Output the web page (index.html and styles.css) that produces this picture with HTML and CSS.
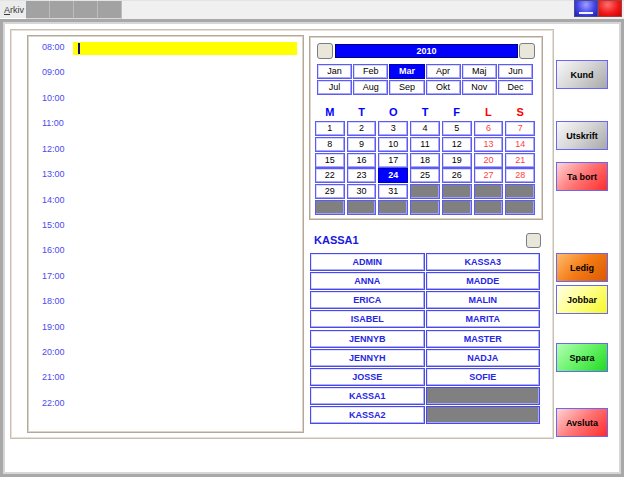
FILE: index.html
```html
<!DOCTYPE html>
<html>
<head>
<meta charset="utf-8">
<link rel="stylesheet" href="styles.css">
</head>
<body>
<div class="titlebar">
  <div class="menu-tab"><span class="ul">A</span>rkiv</div>
  <div class="tool"></div><div class="tool"></div><div class="tool"></div><div class="tool"></div>
  <div class="spacer"></div>
  <div class="win-btn win-min"><span class="min-bar"></span></div>
  <div class="win-btn win-close"></div>
</div>
<div class="window">
  <div class="content">
    <div class="panel">
      <div class="schedule">
        <div class="slot"><span class="time">08:00</span><div class="entry"><span class="caret"></span></div></div>
        <div class="slot"><span class="time">09:00</span></div>
        <div class="slot"><span class="time">10:00</span></div>
        <div class="slot"><span class="time">11:00</span></div>
        <div class="slot"><span class="time">12:00</span></div>
        <div class="slot"><span class="time">13:00</span></div>
        <div class="slot"><span class="time">14:00</span></div>
        <div class="slot"><span class="time">15:00</span></div>
        <div class="slot"><span class="time">16:00</span></div>
        <div class="slot"><span class="time">17:00</span></div>
        <div class="slot"><span class="time">18:00</span></div>
        <div class="slot"><span class="time">19:00</span></div>
        <div class="slot"><span class="time">20:00</span></div>
        <div class="slot"><span class="time">21:00</span></div>
        <div class="slot"><span class="time">22:00</span></div>
      </div>
      <div class="side">
        <div class="calendar">
          <div class="year-row">
            <div class="nav-btn"></div>
            <div class="year">2010</div>
            <div class="nav-btn"></div>
          </div>
          <div class="months">
            <div class="cell">Jan</div><div class="cell">Feb</div><div class="cell sel">Mar</div><div class="cell">Apr</div><div class="cell">Maj</div><div class="cell">Jun</div>
            <div class="cell">Jul</div><div class="cell">Aug</div><div class="cell">Sep</div><div class="cell">Okt</div><div class="cell">Nov</div><div class="cell">Dec</div>
          </div>
          <div class="weekdays">
            <span>M</span><span>T</span><span>O</span><span>T</span><span>F</span><span class="wk-red">L</span><span class="wk-red">S</span>
          </div>
          <div class="days">
            <div class="cell">1</div><div class="cell">2</div><div class="cell">3</div><div class="cell">4</div><div class="cell">5</div><div class="cell we">6</div><div class="cell we">7</div>
            <div class="cell">8</div><div class="cell">9</div><div class="cell">10</div><div class="cell">11</div><div class="cell">12</div><div class="cell we">13</div><div class="cell we">14</div>
            <div class="cell">15</div><div class="cell">16</div><div class="cell">17</div><div class="cell">18</div><div class="cell">19</div><div class="cell we">20</div><div class="cell we">21</div>
            <div class="cell">22</div><div class="cell">23</div><div class="cell sel">24</div><div class="cell">25</div><div class="cell">26</div><div class="cell we">27</div><div class="cell we">28</div>
            <div class="cell">29</div><div class="cell">30</div><div class="cell">31</div><div class="cell empty"></div><div class="cell empty"></div><div class="cell empty"></div><div class="cell empty"></div>
            <div class="cell empty"></div><div class="cell empty"></div><div class="cell empty"></div><div class="cell empty"></div><div class="cell empty"></div><div class="cell empty"></div><div class="cell empty"></div>
          </div>
        </div>
        <div class="user-head">
          <span class="user-title">KASSA1</span>
          <div class="check"></div>
        </div>
        <div class="users">
          <div class="user">ADMIN</div><div class="user">KASSA3</div>
          <div class="user">ANNA</div><div class="user">MADDE</div>
          <div class="user">ERICA</div><div class="user">MALIN</div>
          <div class="user">ISABEL</div><div class="user">MARITA</div>
          <div class="user">JENNYB</div><div class="user">MASTER</div>
          <div class="user">JENNYH</div><div class="user">NADJA</div>
          <div class="user">JOSSE</div><div class="user">SOFIE</div>
          <div class="user">KASSA1</div><div class="user empty"></div>
          <div class="user">KASSA2</div><div class="user empty"></div>
        </div>
      </div>
    </div>
    <div class="actions">
      <div class="btn c-gray b-kund">Kund</div>
      <div class="btn c-gray b-utskrift">Utskrift</div>
      <div class="btn c-red b-tabort">Ta bort</div>
      <div class="btn c-orange b-ledig">Ledig</div>
      <div class="btn c-yellow b-jobbar">Jobbar</div>
      <div class="btn c-green b-spara">Spara</div>
      <div class="btn c-red b-avsluta">Avsluta</div>
    </div>
  </div>
</div>
</body>
</html>
```
FILE: styles.css
```css
* { box-sizing: border-box; }
html, body { margin: 0; padding: 0; }
body {
  width: 624px;
  height: 477px;
  overflow: hidden;
  background: #f0f0f0;
  font-family: "Liberation Sans", Arial, sans-serif;
  font-size: 9px;
}

/* title bar */
.titlebar {
  height: 19px;
  display: flex;
  background: #f0f0f0;
  border-top: 1px solid #e4e4e4;
}
.menu-tab {
  width: 26px;
  height: 18px;
  padding: 4px 0 0 4px;
  color: #3a3a3a;
  font-size: 9px;
  background: #ececec;
  border-bottom: 1px solid #ffffff;
}
.ul { text-decoration: underline; }
.tool {
  width: 24px;
  height: 18px;
  background: #a2a2a2;
  border-right: 1px solid #bcbcbc;
  border-bottom: 1px solid #d8d8d8;
}
.spacer { flex: 1; }
.win-btn {
  width: 24px;
  height: 17px;
  margin-top: -1px;
}
.win-min {
  background: radial-gradient(ellipse at 50% 25%, #a0a0ff 0%, #4646e8 55%, #1e1ea8 100%);
  border: 1px solid #4a4a90;
  display: flex;
  justify-content: center;
  align-items: flex-end;
  padding-bottom: 2px;
}
.min-bar {
  width: 14px;
  height: 2px;
  background: #f4f4ff;
}
.win-close {
  margin-right: 2px;
  background: radial-gradient(ellipse at 40% 25%, #ff7070 0%, #f01818 55%, #c80000 100%);
  border: 1px solid #a04040;
}

/* window */
.window {
  height: 458px;
  border: 3px solid #a8a8a8;
  background: #ffffff;
  box-shadow: inset 0 0 0 2px #d6d6d6;
}
.content {
  display: flex;
  padding: 7px 0 0 7px;
}
.panel {
  width: 544px;
  height: 410px;
  border: 1px solid #c8c0b4;
  box-shadow: inset 0 0 0 1px #e6e0d8;
  padding: 5px 0 0 16px;
  display: flex;
  gap: 5px;
  align-items: flex-start;
}

/* schedule */
.schedule {
  width: 277px;
  height: 398px;
  border: 1px solid #b4a898;
  box-shadow: inset 0 0 0 1px #dcd4c8;
  padding: 2px 0 0 2px;
}
.slot {
  height: 25.43px;
  display: flex;
  align-items: flex-start;
  padding-top: 4px;
}
.time {
  width: 43px;
  padding-left: 12px;
  color: #4a4af0;
  font-size: 9px;
  line-height: 11px;
}
.entry {
  width: 224px;
  height: 13px;
  background: #ffff00;
  padding: 1px 0 0 5px;
}
.caret {
  display: block;
  width: 2px;
  height: 11px;
  background: #10108a;
}

/* calendar */
.side {
  width: 234px;
  margin-top: 1px;
}
.calendar {
  height: 184px;
  border: 1px solid #b4a898;
  box-shadow: inset 0 0 0 1px #dcd4c8;
  padding: 6px 0 0 7px;
}
.year-row {
  display: flex;
  align-items: center;
  height: 16px;
}
.nav-btn {
  width: 16px;
  height: 16px;
  background: #e9e7d9;
  border: 1px solid #7c7c88;
  border-radius: 3px;
}
.year {
  width: 183px;
  height: 14px;
  margin: 0 1px 0 2px;
  background: #0000ff;
  border: 1px solid #00007a;
  color: #ffffff;
  font-weight: bold;
  font-size: 9px;
  line-height: 12px;
  text-align: center;
}
.months {
  margin-top: 5px;
  width: 216px;
  display: grid;
  grid-template-columns: repeat(6, 1fr);
  grid-auto-rows: 15px;
  gap: 1px;
}
.cell {
  background: #ffffff;
  border: 1px solid #5c5cf0;
  box-shadow: inset -1px -1px 0 #a8a8ff, inset 1px 1px 0 #d8d8ff;
  color: #000000;
  font-size: 9px;
  line-height: 13px;
  text-align: center;
}
.cell.sel {
  background: #0000ff;
  border-color: #0000c0;
  box-shadow: none;
  color: #ffffff;
  font-weight: bold;
}
.cell.we { color: #ff4040; }
.cell.empty {
  background: #808080;
  box-shadow: inset -1px -1px 0 #a0a0ff;
}
.weekdays {
  margin: 10px 0 2px -2px;
  width: 220px;
  display: grid;
  grid-template-columns: repeat(7, 1fr);
  column-gap: 2px;
  height: 14px;
  line-height: 14px;
  font-size: 11px;
  font-weight: bold;
  color: #0000ff;
  text-align: center;
}
.weekdays .wk-red { color: #ff0000; }
.days {
  margin-left: -2px;
  width: 220px;
  display: grid;
  grid-template-columns: repeat(7, 1fr);
  grid-auto-rows: 15px;
  column-gap: 2px;
  row-gap: 0.8px;
}

/* users */
.user-head {
  margin-top: 12px;
  height: 17px;
  display: flex;
  align-items: center;
  justify-content: space-between;
  padding: 0 2px 0 5px;
}
.user-title {
  font-size: 11px;
  font-weight: bold;
  color: #1818e0;
  line-height: 17px;
}
.check {
  width: 15px;
  height: 15px;
  background: #e9e7d9;
  border: 1px solid #7c7c88;
  border-radius: 3px;
}
.users {
  margin: 4px 0 0 1px;
  width: 230px;
  display: grid;
  grid-template-columns: 1fr 1fr;
  grid-auto-rows: 18px;
  column-gap: 1px;
  row-gap: 1.125px;
}
.user {
  background: #ffffff;
  border: 1px solid #4a4ae6;
  box-shadow: inset -1px -1px 0 #b0b0ff, inset 1px 1px 0 #e0e0ff;
  color: #2626e4;
  font-weight: bold;
  font-size: 9px;
  line-height: 16px;
  text-align: center;
}
.user.empty {
  background: #808080;
  box-shadow: inset -1px -1px 0 #a8a8ff;
}

/* action buttons */
.actions {
  margin-left: 2px;
  width: 52px;
  display: flex;
  flex-direction: column;
}
.btn {
  height: 29px;
  border: 1px solid #6868f4;
  font-size: 9px;
  font-weight: bold;
  color: #000000;
  display: flex;
  align-items: center;
  justify-content: center;
}
.c-gray { background: linear-gradient(135deg, #f8f8f8 0%, #d4d4d4 50%, #a8a8a8 100%); }
.c-red { background: linear-gradient(135deg, #ffd4d4 0%, #ff7474 50%, #ff2c2c 100%); }
.c-orange { background: linear-gradient(135deg, #ffbc6c 0%, #f47a14 50%, #d85a00 100%); }
.c-yellow { background: linear-gradient(135deg, #ffffe8 0%, #ffff88 50%, #f6f628 100%); }
.c-green { background: linear-gradient(135deg, #b4ffb4 0%, #66f266 50%, #22d822 100%); }
.b-kund { margin-top: 31px; }
.b-utskrift { margin-top: 32px; }
.b-tabort { margin-top: 12px; }
.b-ledig { margin-top: 62px; }
.b-jobbar { margin-top: 3px; }
.b-spara { margin-top: 29px; }
.b-avsluta { margin-top: 36px; }
```
